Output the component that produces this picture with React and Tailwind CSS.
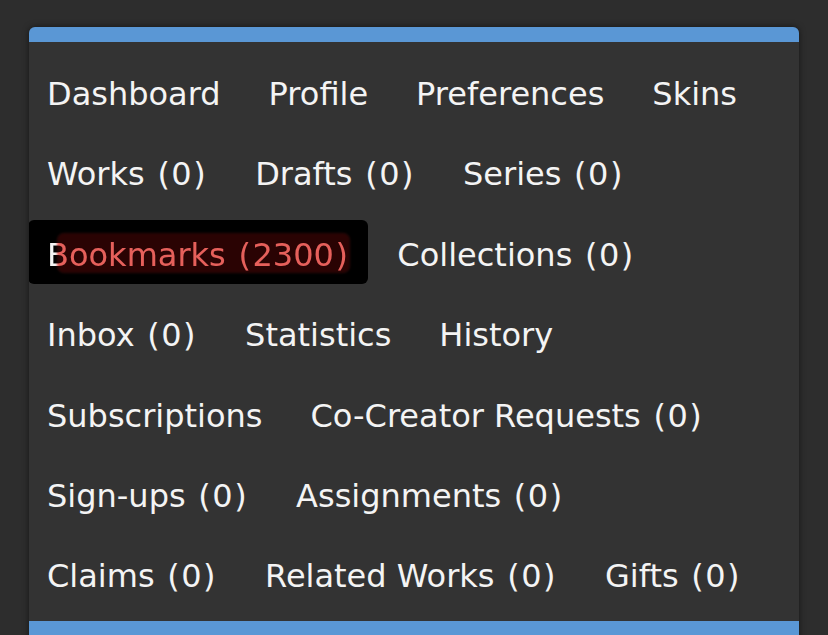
import React from "react";

const rows = [
  ["Dashboard", "Profile", "Preferences", "Skins"],
  ["Works (0)", "Drafts (0)", "Series (0)"],
  ["Bookmarks (2300)", "Collections (0)"],
  ["Inbox (0)", "Statistics", "History"],
  ["Subscriptions", "Co-Creator Requests (0)"],
  ["Sign-ups (0)", "Assignments (0)"],
  ["Claims (0)", "Related Works (0)", "Gifts (0)"],
];

function Label({ text }) {
  const m = text.match(/^(.*) \((\d+)\)$/);
  if (!m) return <span className="relative">{text}</span>;
  return (
    <span className="relative">
      {m[1]}
      <span className="pl-[1px]"> </span>
      <span className="px-[1.5px]">(</span>
      {m[2]}
      <span className="px-[1.5px]">)</span>
    </span>
  );
}

function Item({ label }) {
  const active = label === "Bookmarks (2300)";
  if (active) {
    return (
      <li className="relative isolate flex h-[64px] items-center rounded-[6px] bg-black px-[19px] pt-[6px] text-[#f4f4f4]">
        <Label text={label} />
        <span className="pointer-events-none absolute left-[29px] top-[13px] h-[40px] w-[293px] rounded-[7px] bg-[#2c0707] mix-blend-screen blur-[1px]" />
        <span className="pointer-events-none absolute left-[29px] top-[13px] h-[40px] w-[293px] rounded-[7px] bg-[#ef645f] mix-blend-multiply blur-[1px]" />
      </li>
    );
  }
  return (
    <li className="flex h-[64px] items-center px-[19px] pt-[6px] text-[#f4f4f4]">
      <Label text={label} />
    </li>
  );
}

export default function App() {
  return (
    <div
      className="h-[635px] w-[828px] overflow-hidden bg-[#2d2d2d] pl-[29px] pt-[27px]"
      style={{ fontFamily: '"DejaVu Sans", Verdana, sans-serif' }}
    >
      <div className="w-[770px] overflow-hidden rounded-t-[6px] bg-[#333333] shadow-[0_0_6px_rgba(0,0,0,0.55)]">
        <div className="h-[15px] bg-[#5a97d5]" />
        <nav className="flex flex-col gap-y-[16.4px] pb-[16px] pt-[17px] text-[32px] leading-none">
          {rows.map((row, i) => (
            <ul key={i} className="-ml-[1px] flex gap-x-[10px]">
              {row.map((label) => (
                <Item key={label} label={label} />
              ))}
            </ul>
          ))}
        </nav>
        <div className="h-[20px] bg-[#5a97d5]" />
      </div>
    </div>
  );
}
